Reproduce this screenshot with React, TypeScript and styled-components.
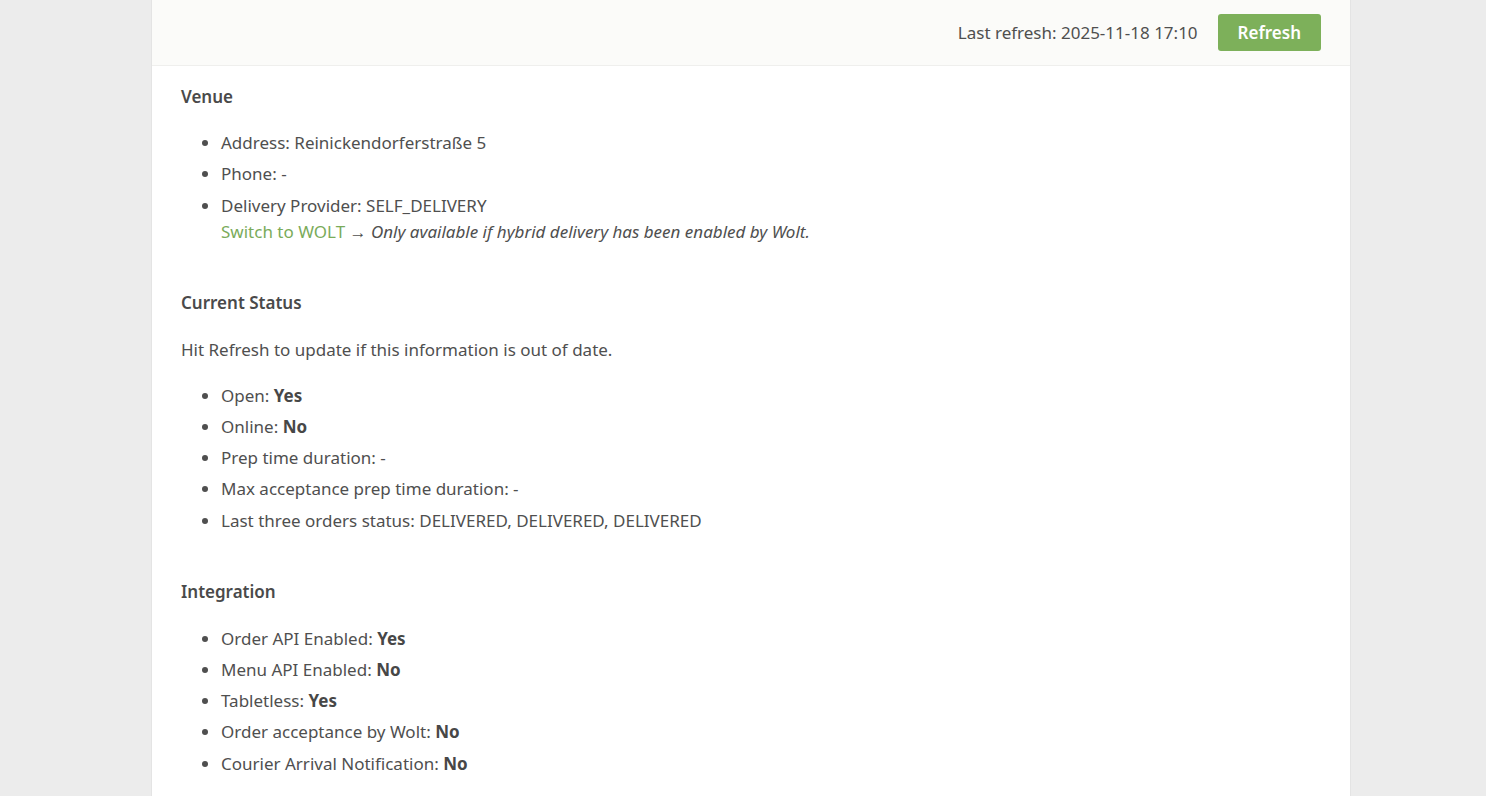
import styled, { createGlobalStyle } from "styled-components"

const GlobalStyle = createGlobalStyle`
  html, body {
    margin: 0;
    padding: 0;
    background: #ececec;
    font-family: "Noto Sans", "Open Sans", sans-serif;
    font-size: 17px;
    color: #4f4f4f;
  }
`

const Page = styled.div`
  display: flex;
  justify-content: center;
  padding-left: 16px;
  min-height: 100vh;
`

const Panel = styled.div`
  width: 1200px;
  box-sizing: border-box;
  background: #ffffff;
  border-left: 1px solid #e4e4e4;
  border-right: 1px solid #e4e4e4;
`

const TopBar = styled.header`
  height: 66px;
  box-sizing: border-box;
  display: flex;
  align-items: center;
  justify-content: flex-end;
  gap: 20px;
  padding: 0 29px 1px 30px;
  background: #fbfbf9;
  border-bottom: 1px solid #efefed;
`

const LastRefresh = styled.span`
  color: #4f4f4f;
`

const RefreshButton = styled.button`
  height: 37px;
  padding: 0 20px;
  border: 0;
  border-radius: 3px;
  background: #7db05a;
  color: #ffffff;
  font-family: inherit;
  font-size: 17px;
  font-weight: 600;
  cursor: pointer;
`

const Content = styled.main`
  padding: 19px 29px 10px 29px;
`

const Section = styled.section`
  margin-bottom: 46px;
  &:last-child {
    margin-bottom: 0;
  }
`

const Heading = styled.h3<{ $gap?: number }>`
  margin: 0 0 ${(p) => p.$gap ?? 21}px;
  font-size: 17px;
  line-height: 24px;
  font-weight: 600;
  color: #4a4a4a;
`

const Note = styled.p`
  margin: 22px 0 20px;
  line-height: 26px;
`

const List = styled.ul`
  margin: 0;
  padding-left: 40px;
`

const Item = styled.li`
  line-height: 26px;
  &:not(:last-child) {
    margin-bottom: 5.25px;
  }
`

const Strong = styled.b`
  font-weight: 700;
  color: #474747;
`

const SwitchLink = styled.a`
  color: #7aab5a;
  text-decoration: none;
`

const Hint = styled.em`
  font-style: italic;
`

export default function App() {
  return (
    <>
      <GlobalStyle />
      <Page>
        <Panel>
          <TopBar>
            <LastRefresh>Last refresh: 2025-11-18 17:10</LastRefresh>
            <RefreshButton>Refresh</RefreshButton>
          </TopBar>
          <Content>
            <Section>
              <Heading>Venue</Heading>
              <List>
                <Item>Address: Reinickendorferstraße 5</Item>
                <Item>Phone: -</Item>
                <Item>
                  Delivery Provider: SELF_DELIVERY
                  <br />
                  <SwitchLink href="#">Switch to WOLT</SwitchLink> →{" "}
                  <Hint>Only available if hybrid delivery has been enabled by Wolt.</Hint>
                </Item>
              </List>
            </Section>

            <Section>
              <Heading>Current Status</Heading>
              <Note>Hit Refresh to update if this information is out of date.</Note>
              <List>
                <Item>Open: <Strong>Yes</Strong></Item>
                <Item>Online: <Strong>No</Strong></Item>
                <Item>Prep time duration: -</Item>
                <Item>Max acceptance prep time duration: -</Item>
                <Item>Last three orders status: DELIVERED, DELIVERED, DELIVERED</Item>
              </List>
            </Section>

            <Section>
              <Heading $gap={22}>Integration</Heading>
              <List>
                <Item>Order API Enabled: <Strong>Yes</Strong></Item>
                <Item>Menu API Enabled: <Strong>No</Strong></Item>
                <Item>Tabletless: <Strong>Yes</Strong></Item>
                <Item>Order acceptance by Wolt: <Strong>No</Strong></Item>
                <Item>Courier Arrival Notification: <Strong>No</Strong></Item>
              </List>
            </Section>
          </Content>
        </Panel>
      </Page>
    </>
  )
}
